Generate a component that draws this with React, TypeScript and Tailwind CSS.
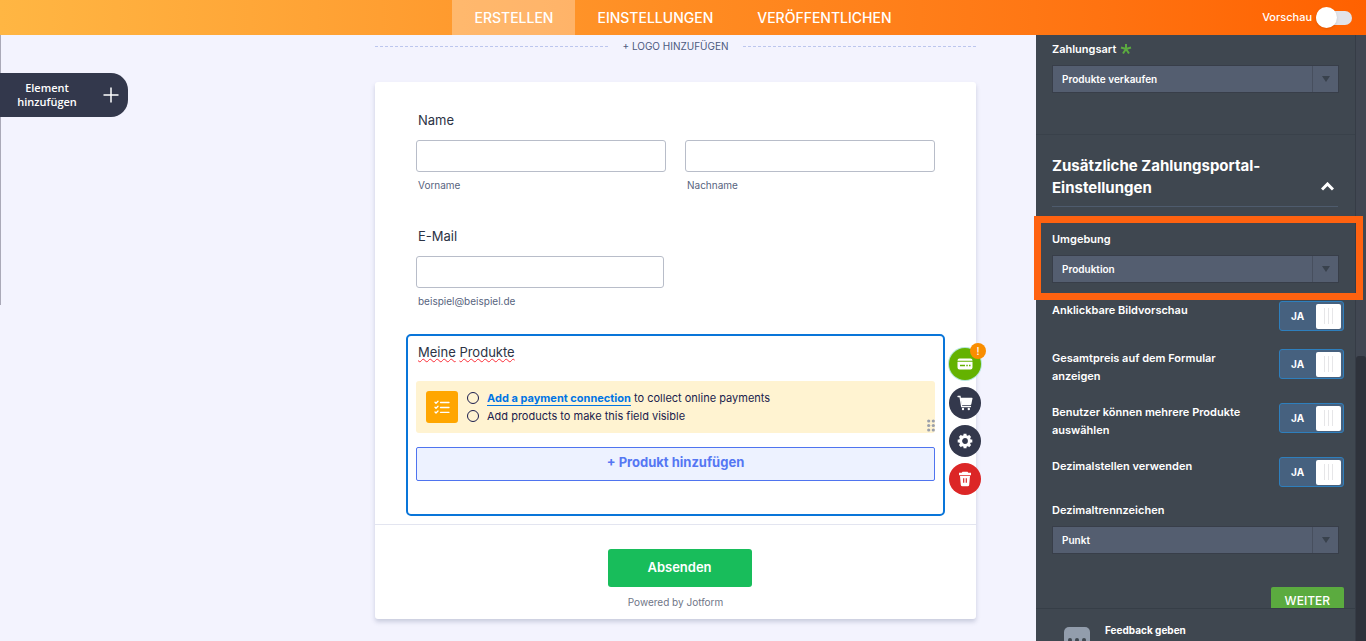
import { useState } from "react";

const tabs = ["Erstellen", "Einstellungen", "Veröffentlichen"];

const toggles = [
  "Anklickbare Bildvorschau",
  "Gesamtpreis auf dem Formular anzeigen",
  "Benutzer können mehrere Produkte auswählen",
  "Dezimalstellen verwenden",
];

function Header() {
  const [preview, setPreview] = useState(false);

  return (
    <header className="grid h-[35px] shrink-0 grid-cols-[1fr_auto_1fr] bg-linear-to-r from-[#ffb643] via-[#ff8c22] to-[#ff6100] text-white">
      <nav className="col-start-2 flex">
        {tabs.map((tab, i) => (
          <a
            key={tab}
            href="#"
            className={`flex items-center px-[22px] text-sm font-medium uppercase ${i === 0 ? "bg-white/30" : ""}`}
          >
            {tab}
          </a>
        ))}
      </nav>
      <label className="flex items-center justify-end gap-1 pr-[14px] text-[11px] font-medium">
        Vorschau
        <input type="checkbox" checked={preview} onChange={(e) => setPreview(e.target.checked)} className="peer sr-only" />
        <span className="flex h-[21px] w-9 items-center">
          <span className="flex h-[14px] w-full items-center rounded-full bg-[#e2e3e9]">
            <span className="size-[21px] shrink-0 rounded-full bg-white shadow" />
          </span>
        </span>
      </label>
    </header>
  );
}

function TextField({ id, hint }: { id: string; hint: string }) {
  return (
    <div className="flex-1">
      <input id={id} type="text" aria-label={hint} className="block h-8 w-full rounded-[3px] border border-[#b8bdc9] bg-white px-2 text-sm" />
      <label htmlFor={id} className="mt-[5px] block pl-0.5 text-[10px] leading-4 text-[#57647e]">
        {hint}
      </label>
    </div>
  );
}

function CardIcon() {
  return (
    <svg viewBox="0 0 16 16" className="size-4">
      <path fill="#fff" d="M2.500 2.500h11a2 2 0 0 1 2 2v.3H.5v-.3a2 2 0 0 1 2-2zM.5 5.800h15v5.700a2 2 0 0 1-2 2h-11a2 2 0 0 1-2-2z" />
      <path fill="#64b200" d="M3 8.700h5v1.500H3zM9.300 8.700h1.500v1.500H9.300zM12 8.700h1.500v1.500H12z" />
    </svg>
  );
}

function CartIcon() {
  return (
    <svg viewBox="0 0 16 16" className="size-4">
      <path d="M1 1.500h2l1.700 10h8.800" fill="none" stroke="#fff" strokeWidth="1.300" strokeLinecap="round" />
      <path fill="#fff" d="M3.600 2.700h11.200a.7.7 0 0 1 .7.900l-1.200 5.700a.9.9 0 0 1-.9.700H4.700z" />
      <circle cx="6" cy="14" r="1.200" fill="#fff" />
      <circle cx="11.800" cy="14" r="1.200" fill="#fff" />
    </svg>
  );
}

function GearIcon() {
  return (
    <svg viewBox="0 0 16 16" className="size-4">
      <circle cx="8" cy="8" r="4.400" fill="none" stroke="#fff" strokeWidth="3" />
      <path
        d="M8 .7v3M8 12.300v3M.7 8h3M12.300 8h3M2.850 2.850l2 2M11.150 11.150l2 2M2.850 13.150l2-2M11.150 4.850l2-2"
        stroke="#fff"
        strokeWidth="3"
      />
    </svg>
  );
}

function TrashIcon() {
  return (
    <svg viewBox="0 0 16 16" className="size-4">
      <path fill="#fff" d="M5.500 .8h5l.8 1H14v2.400H2V1.800h2.700zM3 5h10l-.8 9a1.500 1.500 0 0 1-1.500 1.300H5.300A1.500 1.500 0 0 1 3.800 14z" />
      <path d="M6.700 7.300v4.500M9.300 7.300v4.500" stroke="#dc2626" strokeWidth="1.200" />
    </svg>
  );
}

function FieldActions() {
  return (
    <div className="absolute top-3 left-full ml-1.5 flex flex-col gap-1.5">
      <button aria-label="Zahlung" className="relative mb-px flex size-8 items-center justify-center rounded-full bg-[#64b200] ring-1 ring-[#b5e6d8]">
        <CardIcon />
        <span className="absolute -top-[5px] -right-[5px] flex size-4 items-center justify-center rounded-full bg-[#f98d00] text-[10px] font-medium text-white">
          !
        </span>
      </button>
      <button aria-label="Warenkorb" className="flex size-8 items-center justify-center rounded-full bg-[#33384c]">
        <CartIcon />
      </button>
      <button aria-label="Eigenschaften" className="flex size-8 items-center justify-center rounded-full bg-[#33384c]">
        <GearIcon />
      </button>
      <button aria-label="Löschen" className="flex size-8 items-center justify-center rounded-full bg-[#dc2626]">
        <TrashIcon />
      </button>
    </div>
  );
}

function ProductField() {
  return (
    <div className="relative mt-[25px] rounded-[5px] border-2 border-[#0975d9] px-2 pt-[7px] pb-[33px]">
      <h2 className="pl-0.5 text-[13px] leading-[18px] text-[#2c3345]">
        <span className="underline decoration-red-500 decoration-wavy decoration-1">Meine</span>{" "}
        <span className="underline decoration-red-500 decoration-wavy decoration-1">Produkte</span>
      </h2>
      <div className="relative mt-5 flex h-[52px] items-center rounded-[3px] bg-[#fff3d1] px-[10px]">
        <span className="flex size-8 items-center justify-center rounded-[3px] bg-[#ffa600]">
          <svg viewBox="0 0 16 16" className="size-4" fill="none" stroke="#fff" strokeWidth="1.300" strokeLinecap="round" strokeLinejoin="round">
            <path d="M6.500 3.500H15M6.500 8.500H15M6.500 13.300H15M1 3.200l1 1 2-2M1 8.200l1 1 2-2M1 13l1 1 2-2" />
          </svg>
        </span>
        <ul className="ml-[9px] text-[11px] leading-[18px] text-[#1a1c4d]">
          <li className="flex items-center gap-2">
            <span className="size-3 rounded-full border border-[#1a1c4d]" />
            <span>
              <a href="#" className="border-b border-[#0075e3] font-bold text-[#0075e3]">
                Add a payment connection
              </a>{" "}
              to collect online payments
            </span>
          </li>
          <li className="flex items-center gap-2">
            <span className="size-3 rounded-full border border-[#1a1c4d]" />
            Add products to make this field visible
          </li>
        </ul>
        <svg viewBox="0 0 8 13" className="absolute right-0 bottom-[1px] h-[13px] w-2" fill="#9a9fab">
          <circle cx="1.700" cy="2" r="1.600" />
          <circle cx="6.300" cy="2" r="1.600" />
          <circle cx="1.700" cy="6.500" r="1.600" />
          <circle cx="6.300" cy="6.500" r="1.600" />
          <circle cx="1.700" cy="11" r="1.600" />
          <circle cx="6.300" cy="11" r="1.600" />
        </svg>
      </div>
      <button className="mt-[14px] flex h-[34px] w-full justify-center rounded-[2px] border border-[#4f74ef] bg-[#edf2ff] pt-[5px] text-[13px] font-bold text-[#5577f3]">
        + Produkt hinzufügen
      </button>
      <FieldActions />
    </div>
  );
}

function FormBuilder() {
  return (
    <main className="min-w-0 flex-1 pr-[60px]">
      <div className="flex h-[23px] items-center gap-[14px]">
        <span className="flex-1 border-t border-dashed border-[#bcc6ee]" />
        <button className="text-[10px] text-[#4c5a80]">+ LOGO HINZUFÜGEN</button>
        <span className="flex-1 border-t border-dashed border-[#bcc6ee]" />
      </div>
      <form onSubmit={(e) => e.preventDefault()} className="mt-6 rounded-[3px] bg-white shadow-[0_3px_4px_rgba(84,95,130,0.25)]">
        <div className="px-[31px] pt-[29px] pb-2">
          <fieldset className="px-[10px]">
            <legend className="pl-0.5 text-[13px] leading-[18px] text-[#2c3345]">Name</legend>
            <div className="mt-[11px] flex gap-[19px]">
              <TextField id="first" hint="Vorname" />
              <TextField id="last" hint="Nachname" />
            </div>
          </fieldset>
          <div className="mt-[34px] px-[10px]">
            <h2 className="pl-0.5 text-[13px] leading-[18px] text-[#2c3345]">E-Mail</h2>
            <div className="mt-[11px] flex w-[248px]">
              <TextField id="email" hint="beispiel@beispiel.de" />
            </div>
          </div>
          <ProductField />
        </div>
        <div className="flex flex-col items-center border-t border-[#e3e5f0] pt-6 pb-[9px] text-[13px]">
          <button type="submit" className="ml-2 h-[38px] w-36 rounded-[3px] bg-[#18bd5b] font-semibold text-white">
            Absenden
          </button>
          <p className="mt-[7px] text-[10px] leading-4 text-[#6f7687]">Powered by Jotform</p>
        </div>
      </form>
    </main>
  );
}

function SelectField({ id, label, value, required }: { id: string; label: string; value: string; required?: boolean }) {
  return (
    <div>
      <label htmlFor={id} className="flex items-center gap-1 text-[11px] leading-[18px] font-semibold">
        {label}
        {required && (
          <svg viewBox="0 0 12 12" className="size-3" stroke="#5bab3f" strokeWidth="2">
            <path d="M6 6V1M6 6L1 4.500M6 6l5-1.500M6 6l-3 4.500M6 6l3 4.500" />
          </svg>
        )}
      </label>
      <div className="relative mt-[7px]">
        <select id={id} className="block h-7 w-full appearance-none border border-[#383e49] bg-[#545e70] pl-[9px] text-[10px] font-semibold text-white">
          <option>{value}</option>
        </select>
        <span className="pointer-events-none absolute inset-y-px right-px flex w-[26px] items-center justify-center border-l border-[#474f5e]">
          <svg viewBox="0 0 8 6" className="h-1.5 w-2">
            <path d="M0 0h8L4 6z" fill="#39424d" />
          </svg>
        </span>
      </div>
    </div>
  );
}

function ToggleRow({ label }: { label: string }) {
  const [on, setOn] = useState(true);

  return (
    <label className="flex items-start justify-between text-[11px] leading-[18px] font-semibold">
      <span className="max-w-[210px]">{label}</span>
      <input type="checkbox" checked={on} onChange={(e) => setOn(e.target.checked)} className="sr-only" />
      <span className="flex h-[30px] w-[65px] shrink-0 items-center justify-between rounded-[3px] border border-[#2e7fbd] bg-[#46617f] pr-0.5 pl-[11px] text-[10px] font-bold">
        {on ? "JA" : "NEIN"}
        <span className="flex h-[25px] w-[25px] items-center justify-center gap-[3px] rounded-[2px] bg-white">
          <span className="h-4 w-px bg-[#e6e6e8]" />
          <span className="h-4 w-px bg-[#e6e6e8]" />
          <span className="h-4 w-px bg-[#e6e6e8]" />
        </span>
      </span>
    </label>
  );
}

function PaymentSettings() {
  return (
    <aside className="flex w-[330px] shrink-0 bg-[#3f4750] text-white">
      <div className="flex min-w-0 flex-1 flex-col">
        <div className="min-h-0 flex-1">
          <section className="border-b border-[#39414a] pt-[5px] pr-4 pb-[41px] pl-4">
            <SelectField id="type" label="Zahlungsart" value="Produkte verkaufen" required />
          </section>
          <section className="pt-5 pr-[11px] pl-4">
            <div className="mr-1.5 flex items-end justify-between border-b border-[#4e5b6d] pb-[7px]">
              <h2 className="max-w-[220px] text-[15px] leading-[22px] font-bold">
                Zusätzliche Zahlungsportal-Einstellungen
              </h2>
              <button aria-label="Einklappen" className="mr-1 mb-2">
                <svg viewBox="0 0 13 9" className="h-[9px] w-[13px]" fill="none" stroke="#fff" strokeWidth="3">
                  <path d="M1 7.500l5.500-5.500L12 7.500" />
                </svg>
              </button>
            </div>
            <div className="relative mt-[23px] mr-[5px]">
              <SelectField id="environment" label="Umgebung" value="Produktion" />
              <span className="pointer-events-none absolute -top-[14px] -right-6 -bottom-[17px] -left-[18px] z-20 border-7 border-[#ff6210]" />
            </div>
            <div className="mt-[18px] flex flex-col gap-[18px]">
              {toggles.map((label) => (
                <ToggleRow key={label} label={label} />
              ))}
            </div>
            <div className="mt-[14px] mr-[5px]">
              <SelectField id="separator" label="Dezimaltrennzeichen" value="Punkt" />
            </div>
            <div className="mt-[33px] flex justify-end">
              <button className="h-[27px] rounded-[2px] bg-[#5bab3f] px-[14px] text-xs font-medium text-white">WEITER</button>
            </div>
          </section>
        </div>
        <a href="#" className="relative z-10 flex h-[33px] shrink-0 gap-[15px] overflow-hidden border-t border-[#363e47] bg-[#3f4750] pl-7 text-[10px] font-bold">
          <span className="mt-[18px] flex h-6 w-[26px] justify-center gap-[3px] rounded-[5px] bg-[#929dac] pt-[11px]">
            <span className="size-1 rounded-full bg-[#3f4750]" />
            <span className="size-1 rounded-full bg-[#3f4750]" />
            <span className="size-1 rounded-full bg-[#3f4750]" />
          </span>
          <span className="mt-[14px]">Feedback geben</span>
        </a>
      </div>
      <div className="flex w-[11px] flex-col border-l border-[#363c46] bg-[#414752]">
        <span className="mt-auto h-[47%] w-full rounded-t-[3px] bg-[#2e323b]" />
      </div>
    </aside>
  );
}

export default function App() {
  return (
    <div className="flex h-screen flex-col overflow-hidden bg-[#f3f3fe] font-['Inter',sans-serif]">
      <Header />
      <div className="flex min-h-0 flex-1">
        <div className="w-[375px] shrink-0">
          <div className="h-[270px] border-l border-[#aaa9b8]">
            <div className="h-[38px]" />
            <button className="-ml-px flex h-11 w-32 items-center justify-between rounded-r-[17px] bg-[#33384c] pr-[9px] pl-[17px] font-['Open_Sans',sans-serif] text-[11px] leading-[14px] font-semibold text-white">
              <span className="w-[60px]">Element hinzufügen</span>
              <svg viewBox="0 0 16 16" className="size-4" stroke="#fff" strokeWidth="1.500">
                <path d="M8 .5v15M.5 8h15" />
              </svg>
            </button>
          </div>
        </div>
        <FormBuilder />
        <PaymentSettings />
      </div>
    </div>
  );
}
